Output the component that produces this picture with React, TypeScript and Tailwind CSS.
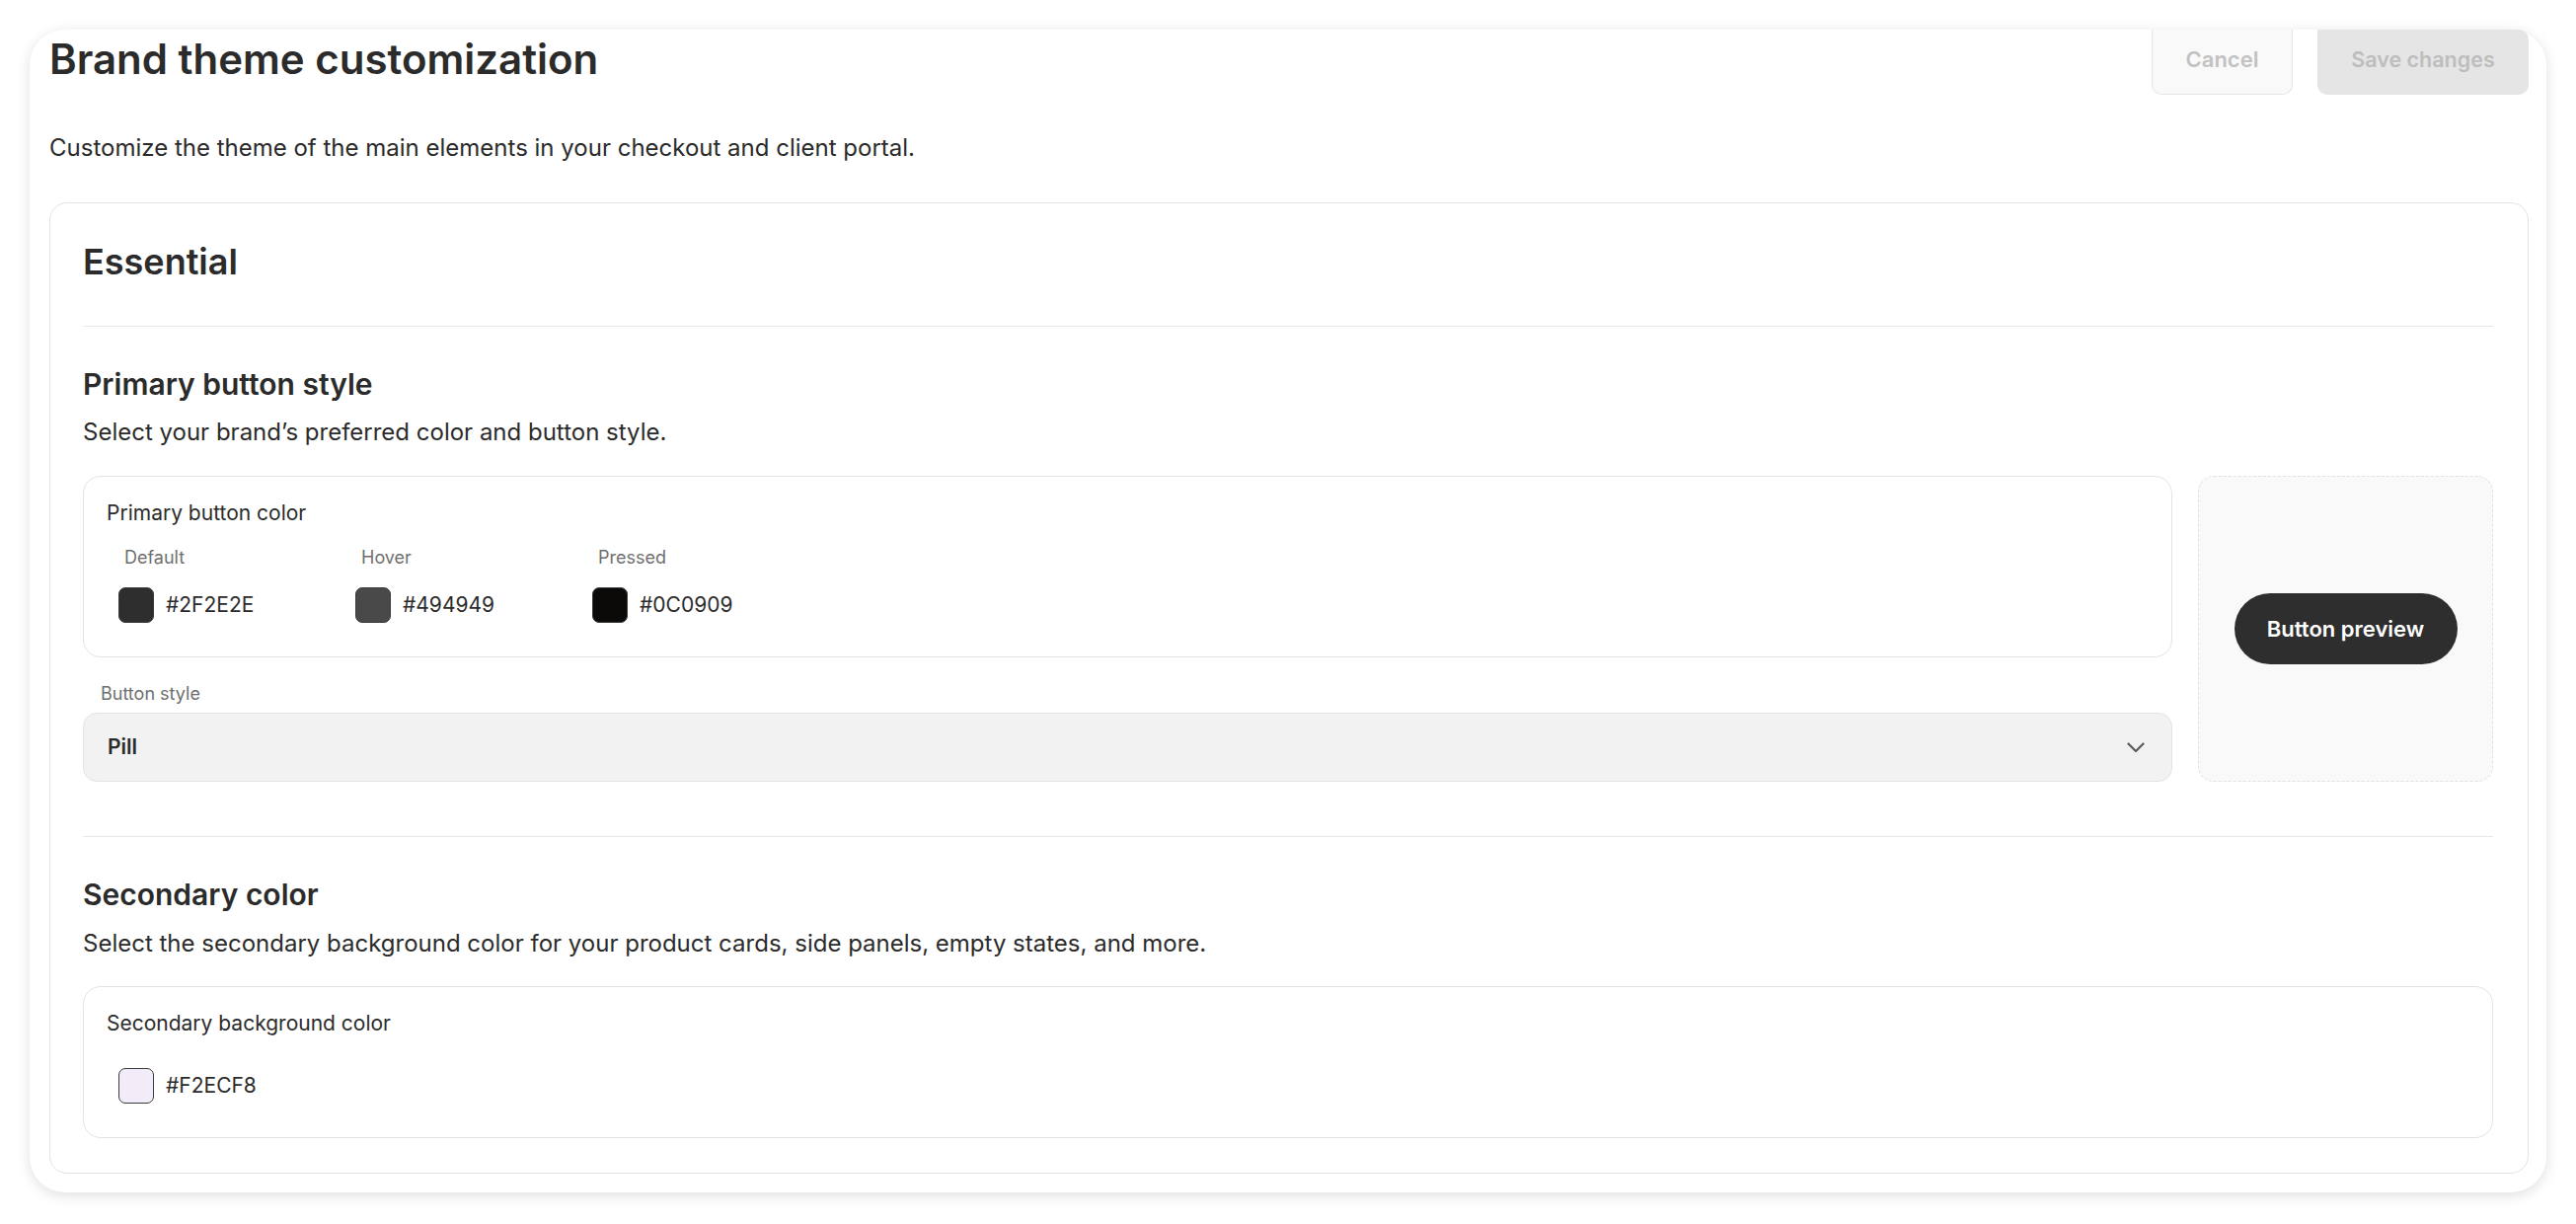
import React, { useState } from 'react';

const primaryColors = [
  { label: 'Default', hex: '#2F2E2E' },
  { label: 'Hover', hex: '#494949' },
  { label: 'Pressed', hex: '#0C0909' },
];

function Swatch({ hex }: { hex: string }) {
  return (
    <div className="flex items-center gap-[12px]">
      <span
        className="block w-[36px] h-[36px] rounded-[7px] border border-[#3a3a3a]"
        style={{ backgroundColor: hex }}
      />
      <span className="text-[21px] leading-[28px] text-[#2b2b2b]">{hex}</span>
    </div>
  );
}

export default function App() {
  const [buttonStyle] = useState('Pill');

  return (
    <div className="min-h-screen bg-white p-[30px] font-['Inter',sans-serif] text-[#2b2b2b]">
      <div className="bg-white rounded-[36px] shadow-[0_3px_14px_rgba(0,0,0,0.13)] pl-[20px] pr-[18px] pb-[19px]">
        {/* Header */}
        <div className="flex justify-between items-start h-[66px]">
          <h1 className="mt-[3px] text-[42px] leading-[54px] font-semibold">Brand theme customization</h1>
          <div className="flex gap-[25px]">
            <button className="w-[143px] h-[66px] pb-[5px] bg-[#f9f9f9] border border-t-0 border-[#e6e6e6] rounded-b-[10px] text-[22px] font-semibold text-[#c2c2c2]">
              Cancel
            </button>
            <button className="w-[214px] h-[66px] pb-[5px] bg-[#e5e5e5] rounded-b-[10px] rounded-tr-[10px] text-[21.5px] font-semibold text-[#bdbdbd]">
              Save changes
            </button>
          </div>
        </div>

        <p className="mt-[37px] text-[24px] leading-[34px]">
          Customize the theme of the main elements in your checkout and client portal.
        </p>

        {/* Essential card */}
        <div className="mt-[38px] border border-[#e3e3e3] rounded-[18px] pl-[33px] pr-[35px] pt-[37px] pb-[35px]">
          <h2 className="text-[36px] leading-[44px] font-semibold">Essential</h2>
          <div className="mt-[43px] border-t border-[#e8e8e8]" />

          {/* Primary button style */}
          <h3 className="mt-[39px] text-[30px] leading-[38px] font-semibold">Primary button style</h3>
          <p className="mt-[14px] text-[24px] leading-[32px]">Select your brand’s preferred color and button style.</p>

          <div className="mt-[28px] flex gap-[26px]">
            <div className="flex-1">
              <div className="border border-[#e3e3e3] rounded-[18px] pl-[23px] pt-[23px] pb-[34px]">
                <div className="text-[21px] leading-[28px]">Primary button color</div>
                <div className="mt-[20px] pl-[12px] flex">
                  {primaryColors.map((c) => (
                    <div key={c.label} className="w-[240px]">
                      <div className="pl-[6px] text-[18px] leading-[22px] text-[#6f6f6f]">{c.label}</div>
                      <div className="mt-[19px]">
                        <Swatch hex={c.hex} />
                      </div>
                    </div>
                  ))}
                </div>
              </div>

              <div className="mt-[25px] pl-[18px] text-[18px] leading-[24px] text-[#6f6f6f]">Button style</div>
              <div className="mt-[7px] h-[70px] bg-[#f2f2f2] border border-[#e3e3e3] rounded-[14px] pl-[24px] pr-[27px] flex items-center justify-between">
                <span className="text-[21px] font-semibold">{buttonStyle}</span>
                <svg width="18" height="11" viewBox="0 0 18 11" fill="none">
                  <path d="M1.5 1.5L9 9L16.5 1.5" stroke="#5a5a5a" strokeWidth="2.2" strokeLinecap="round" strokeLinejoin="round" />
                </svg>
              </div>
            </div>

            <div className="w-[299px] bg-[#f9f9f9] border border-dashed border-[#e2e2e2] rounded-[16px] flex items-center justify-center">
              <button className="w-[226px] h-[72px] rounded-full bg-[#2f2e2e] text-white text-[22px] font-semibold">
                Button preview
              </button>
            </div>
          </div>

          <div className="mt-[55px] border-t border-[#e8e8e8]" />

          {/* Secondary color */}
          <h3 className="mt-[39px] text-[30px] leading-[38px] font-semibold">Secondary color</h3>
          <p className="mt-[15px] text-[24px] leading-[32px]">
            Select the secondary background color for your product cards, side panels, empty states, and more.
          </p>

          <div className="mt-[27px] border border-[#e3e3e3] rounded-[18px] pl-[23px] pt-[23px] pb-[34px]">
            <div className="text-[21px] leading-[28px]">Secondary background color</div>
            <div className="mt-[31px] pl-[12px]">
              <Swatch hex="#F2ECF8" />
            </div>
          </div>
        </div>
      </div>
    </div>
  );
}
